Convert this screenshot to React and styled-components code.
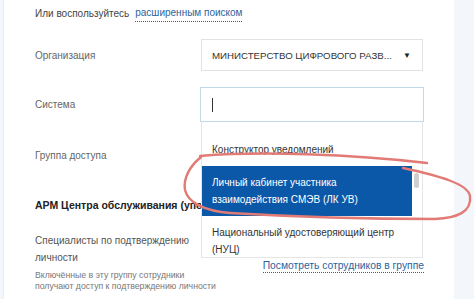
import styled, { createGlobalStyle } from "styled-components";

const GlobalStyle = createGlobalStyle`
  html, body {
    margin: 0;
    padding: 0;
    background: #f3f6fa;
    font-family: "Liberation Sans", Arial, sans-serif;
  }
`;

const Page = styled.div`
  position: relative;
  width: 474px;
  height: 299px;
  overflow: hidden;
  display: flex;
`;

const Card = styled.div`
  margin-left: 3px;
  width: 451px;
  height: 299px;
  background: #fff;
  border-left: 1px solid #ececec;
  box-sizing: border-box;
  padding: 6px 30px 0 31px;
  display: flex;
  flex-direction: column;
  & > * {
    flex-shrink: 0;
  }
`;

const Intro = styled.div`
  font-size: 10px;
  line-height: 16px;
  color: #444;
  display: flex;
  gap: 6px;
`;

const DottedLink = styled.span`
  color: #2a64a0;
  border-bottom: 1px dotted #2a64a0;
  line-height: 13px;
  white-space: nowrap;
`;

const Row = styled.div`
  display: grid;
  grid-template-columns: 165px 224px;
  align-items: center;
  margin-top: ${(p) => p.$gap}px;
  height: ${(p) => p.$h}px;
`;

const Label = styled.div`
  font-size: 10px;
  color: #666;
`;

const Field = styled.div`
  position: relative;
  height: 100%;
`;

const Select = styled.div`
  height: 100%;
  margin: 0 1px;
  box-sizing: border-box;
  border: 1px solid #e2e2e2;
  display: flex;
  align-items: center;
  justify-content: space-between;
  padding: 0 11px 0 10px;
  font-size: 9.7px;
  color: #333;
  white-space: nowrap;
`;

const Arrow = styled.span`
  font-size: 8px;
  color: #222;
`;

const Input = styled.div`
  height: 100%;
  box-sizing: border-box;
  border: 1px solid #c3d8e6;
  display: flex;
  align-items: center;
  padding-left: 11px;
`;

const Caret = styled.span`
  width: 1px;
  height: 14px;
  background: #333;
`;

const Dropdown = styled.div`
  position: absolute;
  top: 100%;
  left: 1px;
  width: 222px;
  height: 136px;
  box-sizing: border-box;
  background: #fff;
  border: 1px solid #e6e6e6;
  border-top: none;
  padding-top: 11px;
  overflow: hidden;
  z-index: 2;
`;

const Option = styled.div`
  margin-right: 10px;
  padding: 8px 10px;
  font-size: 10px;
  line-height: 17px;
  white-space: nowrap;
  color: ${(p) => (p.$active ? "#fff" : "#333")};
  background: ${(p) => (p.$active ? "#0b58a8" : "transparent")};
`;

const Thumb = styled.div`
  position: absolute;
  right: 3px;
  top: 51px;
  width: 5px;
  height: 15px;
  border-radius: 3px;
  background: #cfcfcf;
`;

const Heading = styled.div`
  margin-top: 26px;
  font-size: 10.5px;
  font-weight: bold;
  line-height: 16px;
  color: #222;
  white-space: nowrap;
`;

const GroupRow = styled.div`
  display: grid;
  grid-template-columns: 165px 224px;
  margin-top: 19px;
`;

const GroupName = styled.div`
  font-size: 10px;
  line-height: 17px;
  color: #555;
  white-space: nowrap;
`;

const GroupLink = styled.div`
  display: flex;
  justify-content: flex-end;
  align-items: flex-end;
  font-size: 10.3px;
  margin-bottom: -7px;
`;

const Note = styled.div`
  margin-top: 4px;
  font-size: 8.7px;
  line-height: 11px;
  color: #777;
  white-space: nowrap;
`;

const Scribble = styled.svg`
  position: absolute;
  left: 0;
  top: 0;
  pointer-events: none;
  z-index: 3;
`;

export default function App() {
  return (
    <Page>
      <GlobalStyle />
      <Card>
        <Intro>
          Или воспользуйтесь <DottedLink>расширенным поиском</DottedLink>
        </Intro>
        <Row $gap={17} $h={32}>
          <Label>Организация</Label>
          <Field>
            <Select>
              <span>МИНИСТЕРСТВО ЦИФРОВОГО РАЗВ...</span>
              <Arrow>▼</Arrow>
            </Select>
          </Field>
        </Row>
        <Row $gap={16} $h={35}>
          <Label>Система</Label>
          <Field>
            <Input>
              <Caret />
            </Input>
            <Dropdown>
              <Option>Конструктор уведомлений</Option>
              <Option $active>
                Личный кабинет участника
                <br />
                взаимодействия СМЭВ (ЛК УВ)
              </Option>
              <Option>
                Национальный удостоверяющий центр
                <br />
                (НУЦ)
              </Option>
              <Thumb />
            </Dropdown>
          </Field>
        </Row>
        <Row $gap={17} $h={32}>
          <Label>Группа доступа</Label>
          <Field />
        </Row>
        <Heading>АРМ Центра обслуживания (уполномоченных лиц)</Heading>
        <GroupRow>
          <GroupName>
            Специалисты по подтверждению
            <br />
            личности
          </GroupName>
          <GroupLink>
            <DottedLink>Посмотреть сотрудников в группе</DottedLink>
          </GroupLink>
        </GroupRow>
        <Note>
          Включённые в эту группу сотрудники
          <br />
          получают доступ к подтверждению личности
        </Note>
      </Card>
      <Scribble width="474" height="299" viewBox="0 0 474 299">
        <path
          d="M200 156 C260 151 350 154 427 163"
          fill="none"
          stroke="#e27a76"
          strokeWidth="2.4"
          strokeLinecap="round"
        />
        <path
          d="M403 168 C440 176 468 184 470 196 C472 212 457 218 435 219 C360 219 280 216 230 213 C205 211 188 203 185 190 C183 178 190 166 201 157"
          fill="none"
          stroke="#e27a76"
          strokeWidth="2.4"
          strokeLinecap="round"
        />
      </Scribble>
    </Page>
  );
}
